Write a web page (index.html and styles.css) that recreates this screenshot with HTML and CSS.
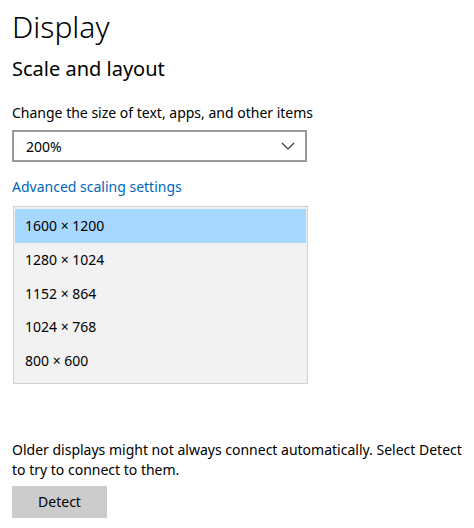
FILE: index.html
```html
<!DOCTYPE html>
<html>
<head lang="en">
    <meta charset="UTF-8">
    <title>Display</title>
    <link rel="stylesheet" href="styles.css">
</head>
<body>
    <div class="page">
        <h1 class="title">Display</h1>
        <h2 class="subtitle">Scale and layout</h2>

        <p class="label">Change the size of text, apps, and other items</p>
        <div class="select">
            <span>200%</span>
            <svg class="chevron" width="14" height="8" viewBox="0 0 14 8">
                <path d="M1 1 L7 7 L13 1" fill="none" stroke="#333" stroke-width="1.1"/>
            </svg>
        </div>

        <a class="link" href="#">Advanced scaling settings</a>

        <ul class="list">
            <li class="current">1600 × 1200</li>
            <li>1280 × 1024</li>
            <li>1152 × 864</li>
            <li>1024 × 768</li>
            <li>800 × 600</li>
        </ul>

        <p class="note">Older displays might not always connect automatically. Select Detect to try to connect to them.</p>
        <button class="btn">Detect</button>
    </div>
</body>
</html>
```
FILE: styles.css
```css
* {
    padding: 0;
    margin: 0;
    list-style: none;
}
body {
    font-family: "Noto Sans", "Open Sans", sans-serif;
    color: #000;
    background: #fff;
}
.page {
    padding: 0 12px;
}
.title {
    font-weight: 300;
    font-size: 30px;
    line-height: 40px;
    padding-top: 7px;
}
.subtitle {
    font-weight: 400;
    font-size: 20px;
    line-height: 28px;
    margin-top: 8px;
}
.label {
    font-size: 14px;
    line-height: 20px;
    margin-top: 20px;
}
.select {
    width: 295px;
    height: 32px;
    margin-top: 7px;
    border: 2px solid #999;
    box-sizing: border-box;
    display: flex;
    align-items: center;
    justify-content: space-between;
    padding: 0 10px 0 12px;
    font-size: 14px;
}
.link {
    display: block;
    color: #0067b8;
    text-decoration: none;
    font-size: 14px;
    line-height: 20px;
    margin-top: 15px;
}
.list {
    width: 295px;
    margin-top: 9px;
    margin-left: 1px;
    padding: 2px 1px 5px;
    box-sizing: border-box;
    border: 1px solid #d0d0d0;
    background: #f2f2f2;
}
.list li {
    height: 33.75px;
    line-height: 33px;
    padding-left: 10px;
    font-size: 14px;
}
.list .current {
    background: #a6d8ff;
}
.note {
    font-size: 14px;
    line-height: 20px;
    margin-top: 56px;
}
.btn {
    display: block;
    width: 95px;
    height: 32px;
    margin-top: 6px;
    border: none;
    background: #cccccc;
    font-family: inherit;
    font-size: 14px;
    color: #000;
}
```
